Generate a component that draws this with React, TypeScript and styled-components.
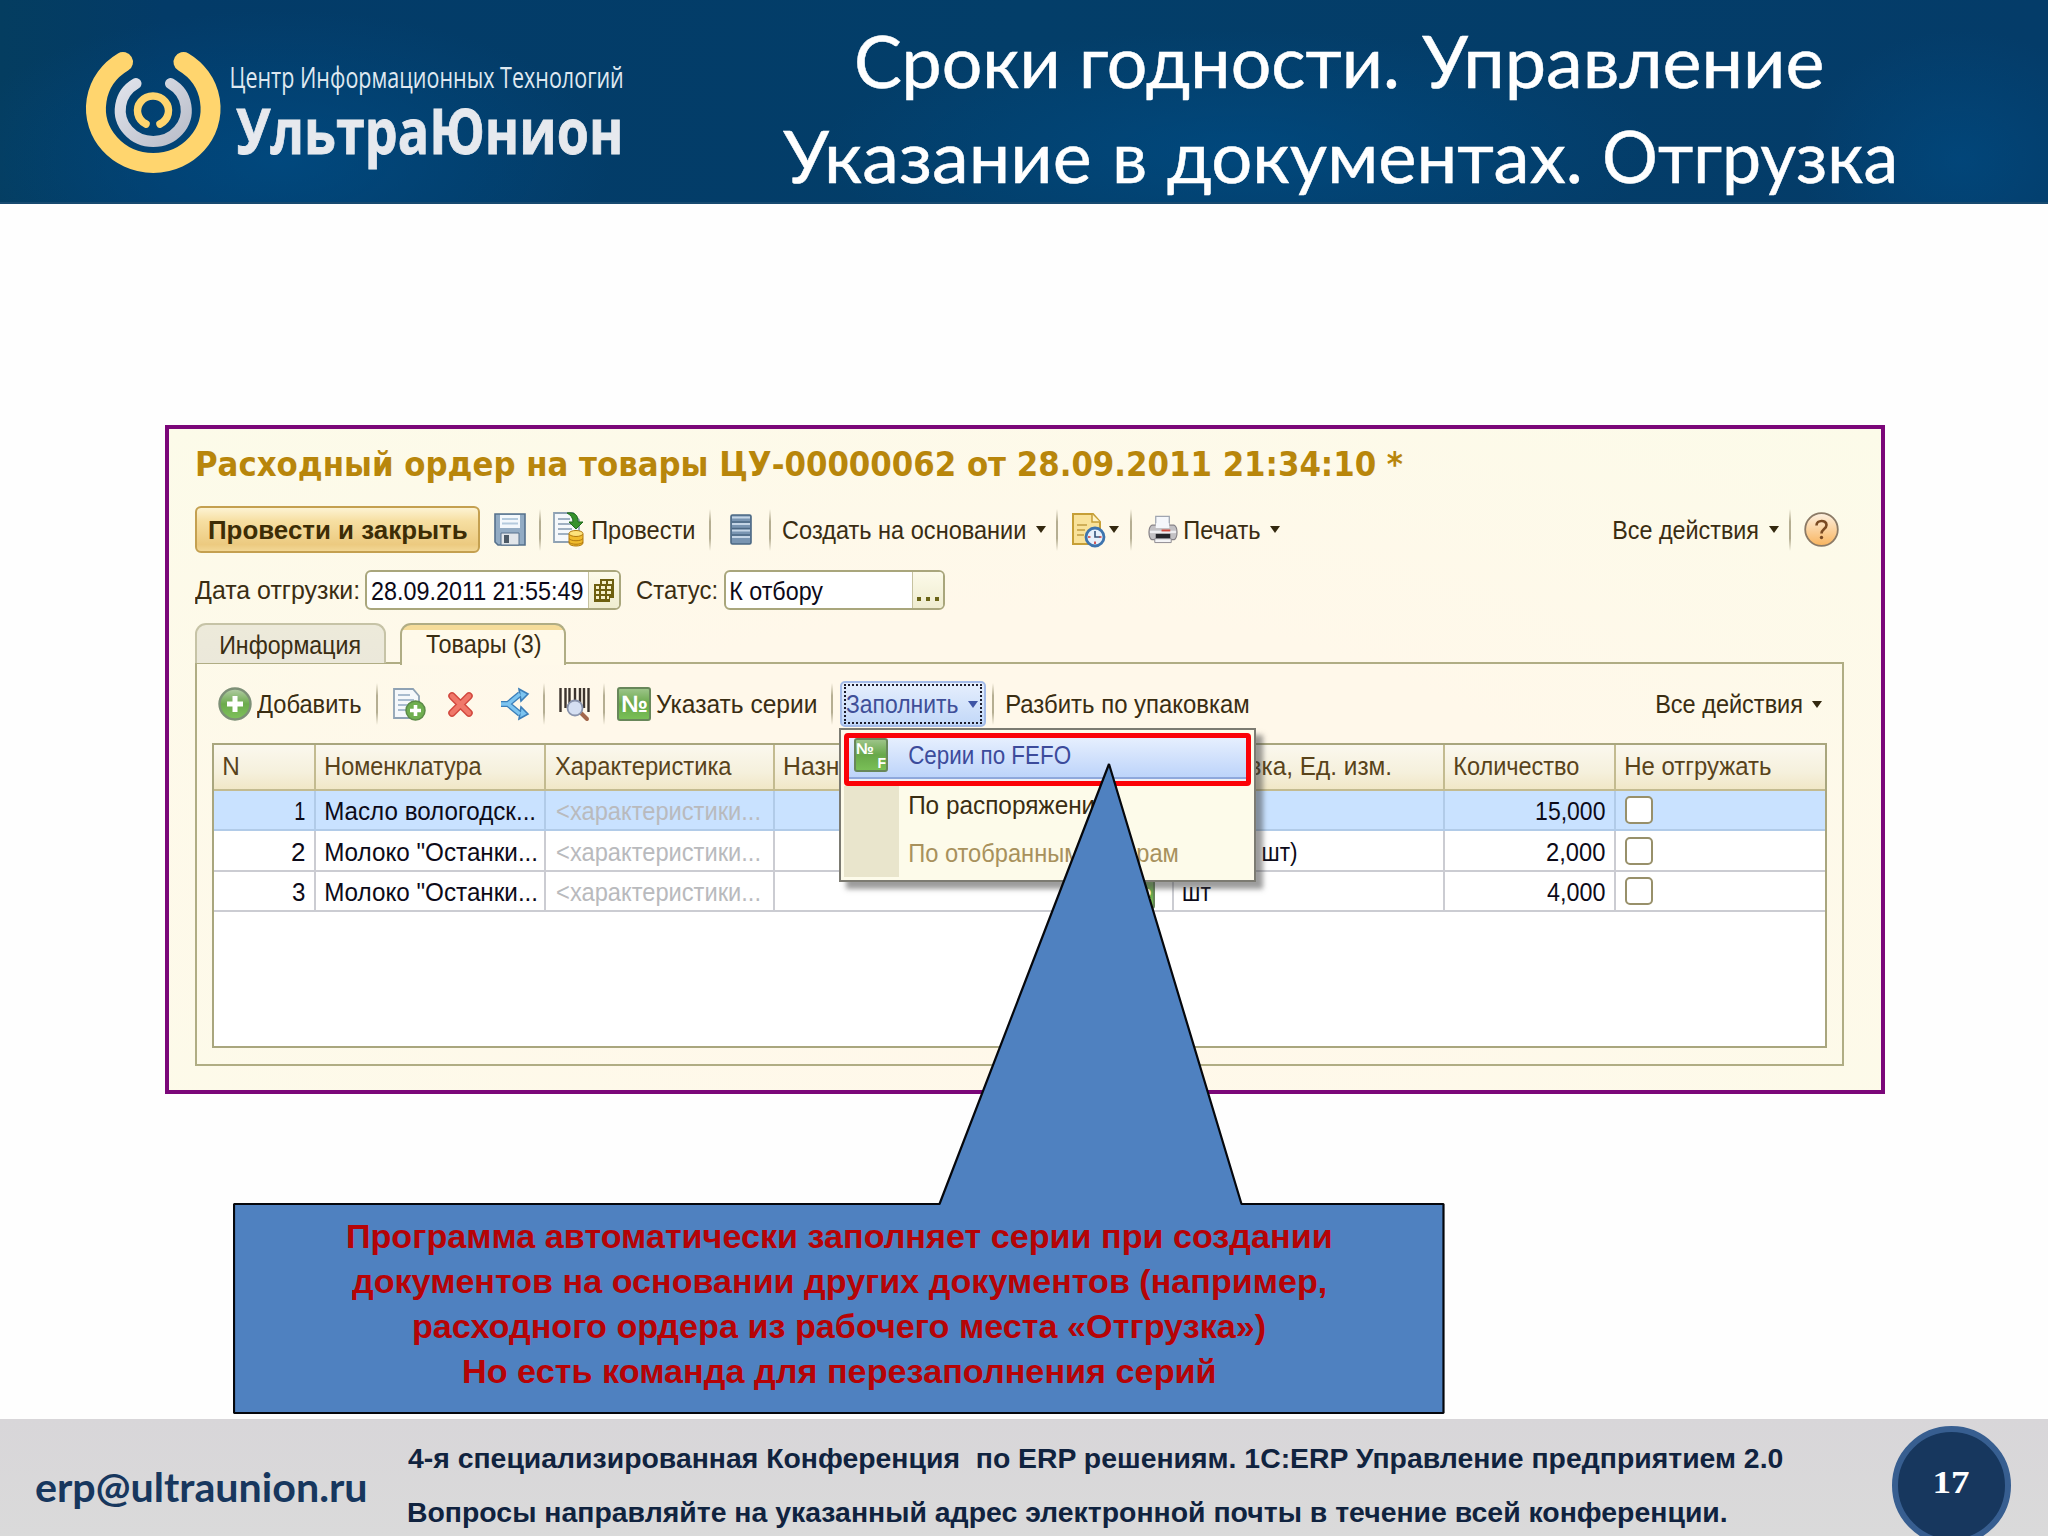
import React, { useLayoutEffect, useRef } from "react";
import styled, { createGlobalStyle, css } from "styled-components";

const GlobalStyle = createGlobalStyle`
  * { box-sizing: border-box; }
  html, body { margin: 0; padding: 0; }
  body { background: #fff; font-family: "Liberation Sans", Arial, sans-serif; }
`;

/* ---------- text fitted to a given ink width ---------- */

type Tone = "ui" | "uiBold" | "docTitle" | "slide" | "logoTop" | "logoMain" | "callout" | "footer" | "mail" | "page";

const tones = {
  ui: css`font: 400 26px/30px "Liberation Sans", Arial, sans-serif;`,
  uiBold: css`font: 700 25.5px/30px "Liberation Sans", Arial, sans-serif;`,
  docTitle: css`font: 700 34px/40px "DejaVu Sans Condensed", "DejaVu Sans", sans-serif;`,
  slide: css`font: 400 71px/95.5px Lato, "Open Sans", sans-serif; -webkit-text-stroke: 0.5px #fff;`,
  logoTop: css`font: 400 29px/36px "Open Sans", "Noto Sans", sans-serif;`,
  logoMain: css`font: 700 62px/70px "Open Sans", "Noto Sans", sans-serif; -webkit-text-stroke: 0.8px #e6e9ee;`,
  callout: css`font: 700 33.5px/45px "Liberation Sans", Arial, sans-serif;`,
  footer: css`font: 700 27.6px/54.6px "Liberation Sans", Arial, sans-serif;`,
  mail: css`font: 700 40px/50px Lato, "Open Sans", sans-serif;`,
  page: css`font: 700 31px/36px "Liberation Serif", serif;`,
};

const FitBox = styled.span<{ $w: number; $tone: Tone; $ml: number; $color?: string }>`
  display: block;
  flex: none;
  width: ${(p) => p.$w}px;
  margin-left: ${(p) => p.$ml}px;
  white-space: pre;
  color: ${(p) => p.$color || "inherit"};
  ${(p) => tones[p.$tone]}
`;
const FitInk = styled.span`
  display: inline-block;
  transform-origin: 0 50%;
`;

function Fit({ w, tone = "ui", ml = 0, color, children }: { w: number; tone?: Tone; ml?: number; color?: string; children: string }) {
  const ref = useRef<HTMLSpanElement>(null);
  useLayoutEffect(() => {
    const el = ref.current;
    const ctx = document.createElement("canvas").getContext("2d");
    if (!el || !ctx) return;
    const s = getComputedStyle(el);
    ctx.font = `${s.fontWeight} ${s.fontSize} ${s.fontFamily}`;
    const m = ctx.measureText(children);
    const k = w / (m.actualBoundingBoxLeft + m.actualBoundingBoxRight);
    el.style.transform = `translateX(${m.actualBoundingBoxLeft * k}px) scaleX(${k})`;
  }, [w, children]);
  return (
    <FitBox $w={w} $tone={tone} $ml={ml} $color={color}>
      <FitInk ref={ref}>{children}</FitInk>
    </FitBox>
  );
}

/* ---------- slide frame ---------- */

const Slide = styled.div`
  width: 2048px;
  height: 1536px;
  display: flex;
  flex-direction: column;
  overflow: hidden;
  background: #fefefe;
`;
const Header = styled.header`
  height: 204px;
  flex: none;
  display: flex;
  border-bottom: 2px solid #174a70;
  background:
    radial-gradient(ellipse 330px 150px at 280px 160px, rgba(0, 76, 132, 0.75), transparent),
    radial-gradient(ellipse 420px 120px at 1240px 150px, rgba(0, 76, 132, 0.7), transparent),
    radial-gradient(ellipse 160px 130px at 1960px 160px, rgba(0, 76, 132, 0.6), transparent),
    linear-gradient(90deg, #043d60, #033b68 8%, #033e69 50%, #043c69);
`;
const Logo = styled.div`
  display: flex;
  align-items: flex-start;
  padding: 50px 0 0 84px;
  width: 782px;
`;
const LogoText = styled.div`
  display: flex;
  flex-direction: column;
  margin-left: 6px;
  padding-top: 9px;
`;
const SlideTitle = styled.h1`
  margin: 0;
  padding-top: 12.5px;
  width: 1112px;
  display: flex;
  flex-direction: column;
  align-items: flex-start;
  color: #fff;
`;
const TitleLine = styled.span`
  display: flex;
`;
const Main = styled.main`
  position: relative;
  flex: 1;
  padding: 221px 0 0 165px;
`;
const Footer = styled.footer`
  height: 117px;
  flex: none;
  display: flex;
  background: linear-gradient(#d8d6d9, #dadada);
  overflow: hidden;
`;
const Mail = styled.div`
  padding: 43px 0 0 36px;
  width: 408px;
  color: #17375e;
`;
const FooterLines = styled.div`
  padding-top: 12.5px;
  width: 1484px;
  color: #10233f;
`;
const PageBadge = styled.div`
  flex: none;
  display: flex;
  align-items: center;
  justify-content: center;
  width: 119px;
  height: 119px;
  margin-top: 7px;
  padding-bottom: 5px;
  border-radius: 50%;
  border: 6px solid #375e90;
  background: #17375e;
  color: #fff;
`;

/* ---------- document window ---------- */

const Window = styled.section`
  width: 1720px;
  height: 669px;
  border: 4px solid #7b0779;
  background: radial-gradient(ellipse 75% 80% at 50% 60%, #fff8ea 40%, #fcfbe9);
  padding-left: 26px;
  color: #3a2d12;
`;
const Row = styled.div<{ $h: number; $mt?: number; $pr?: number }>`
  display: flex;
  align-items: center;
  height: ${(p) => p.$h}px;
  margin-top: ${(p) => p.$mt || 0}px;
  padding-right: ${(p) => p.$pr || 0}px;
`;
const Spacer = styled.div`
  flex: 1;
`;
const PrimaryButton = styled.div`
  display: flex;
  align-items: center;
  width: 285px;
  height: 47px;
  padding-left: 12px;
  border: 2px solid #c4a050;
  border-radius: 6px;
  background: linear-gradient(#fdf3d3, #f6dfa2 30%, #ecca80 85%, #f2d795);
  color: #3d2d05;
`;
const Sep = styled.i<{ $ml: number }>`
  width: 2px;
  height: 42px;
  flex: none;
  margin-left: ${(p) => p.$ml}px;
  background: linear-gradient(transparent, #b5ae92 30%, #b5ae92 70%, transparent);
`;
const Arrow = styled.i<{ $ml: number; $blue?: boolean }>`
  flex: none;
  margin-left: ${(p) => p.$ml}px;
  border: solid transparent;
  border-width: 7px 5.5px 0;
  border-top-color: ${(p) => (p.$blue ? "#3f55a5" : "#33280f")};
`;
const Icon = styled.svg<{ $ml?: number }>`
  display: block;
  flex: none;
  overflow: visible;
  margin-left: ${(p) => p.$ml || 0}px;
`;
const Field = styled.div<{ $w: number; $ml: number }>`
  display: flex;
  width: ${(p) => p.$w}px;
  height: 40px;
  margin-left: ${(p) => p.$ml}px;
  border: 2px solid #a9a67c;
  border-radius: 6px;
  background: #fff;
  overflow: hidden;
  color: #0b0818;
`;
const FieldValue = styled.div`
  flex: 1;
  display: flex;
  align-items: center;
  padding: 2px 0 0 5px;
`;
const FieldButton = styled.div<{ $w: number }>`
  width: ${(p) => p.$w}px;
  display: flex;
  align-items: center;
  justify-content: center;
  border-left: 1.5px solid #c6c2a0;
  background: linear-gradient(#fcfae9, #efecd0);
`;
const Dots = styled.div`
  align-self: flex-end;
  display: flex;
  gap: 5px;
  margin-bottom: 7px;
`;
const Dot = styled.i`
  width: 4px;
  height: 4px;
  background: #6a6418;
`;
const Tabs = styled.div`
  display: flex;
  height: 41px;
  margin-top: 13px;
  gap: 14px;
`;
const Tab = styled.div<{ $w: number; $active?: boolean }>`
  display: flex;
  align-items: center;
  justify-content: center;
  width: ${(p) => p.$w}px;
  height: ${(p) => (p.$active ? 42 : 40)}px;
  padding: ${(p) => (p.$active ? "0 0 2px" : "1px 0 0")};
  border: 2px solid ${(p) => (p.$active ? "#b0ad84" : "#c6c3a6")};
  border-bottom: 0;
  border-radius: 11px 11px 0 0;
  position: relative;
  z-index: 1;
  background: ${(p) =>
    p.$active ? "linear-gradient(#f5dc9a 5px, #fffaea 5px, #fff9ea)" : "linear-gradient(#edeada, #ebe8da)"};
`;
const Panel = styled.div`
  width: 1649px;
  height: 404px;
  border: 2px solid #b0ad84;
  padding-top: 17px;
  margin-top: -2px;
`;
const MenuAnchor = styled.div`
  position: relative;
  flex: none;
  margin-left: 7px;
`;
const FillButton = styled.div`
  display: flex;
  align-items: center;
  width: 146px;
  height: 46px;
  padding: 2px;
  border: 2px solid #a3bae8;
  border-radius: 5px;
  background: linear-gradient(#e6effd, #c2d8f8);
  color: #3f4f98;
`;
const FocusRing = styled.div`
  display: flex;
  align-items: center;
  width: 138px;
  height: 40px;
  border: 2px dotted #1c1c2c;
`;
const Menu = styled.div`
  position: absolute;
  left: -1px;
  top: 47px;
  z-index: 5;
  width: 417px;
  height: 154px;
  padding: 3px;
  border: 2px solid #7c7b72;
  background: #fdfbea;
  box-shadow: 7px 7px 5px rgba(60, 60, 60, 0.5);
`;
const MenuActive = styled.div`
  display: flex;
  align-items: center;
  height: 53px;
  padding: 0 0 9px 5px;
  border: 5px solid #fb0207;
  border-radius: 4px;
  background: linear-gradient(#e6effe, #bdd4fa 39px, #8fa8dc 39px, #8fa8dc 41px, #eef0f5 41px);
  color: #3c4b9b;
`;
const MenuRest = styled.div`
  display: flex;
  flex-direction: column;
  height: 91px;
  border-left: 55px solid #e9e5cc;
`;
const MenuItem = styled.div`
  display: flex;
  flex: none;
  align-items: center;
  height: 38px;
  & + & { margin-top: 10px; }
`;

const Table = styled.div`
  width: 1615px;
  height: 305px;
  margin: 16px 0 0 15px;
  border: 2px solid #a9a67e;
  background: #fff;
`;
const TableRow = styled.div<{ $kind?: "head" | "active" }>`
  display: grid;
  grid-template-columns: 102px 230px 229px 399px 271px 171px 209px;
  height: ${(p) => (p.$kind === "head" ? 46 : 40.4)}px;
  color: ${(p) => (p.$kind === "head" ? "#59431a" : "#0c0a18")};
  background: ${(p) =>
    p.$kind === "head" ? "linear-gradient(#fbf8ee, #f5f0dc 60%, #f0e6c4)" : p.$kind === "active" ? "#c9e2ff" : "#fff"};
  --line: ${(p) => (p.$kind === "head" ? "#c3bb90" : p.$kind === "active" ? "#b1cbe8" : "#cbccd2")};
  --shift: ${(p) => (p.$kind === "head" ? "0 0 3px" : "2px 0 0")};
`;
const Cell = styled.div<{ $right?: boolean; $pad?: number }>`
  display: flex;
  align-items: center;
  justify-content: ${(p) => (p.$right ? "flex-end" : "flex-start")};
  padding: var(--shift);
  padding-right: ${(p) => (p.$right ? p.$pad ?? 9 : 0)}px;
  padding-left: ${(p) => (p.$right ? 0 : p.$pad ?? 10)}px;
  border-bottom: 2px solid var(--line);
  border-right: 2px solid var(--line);
  &:last-child { border-right: 0; }
`;
const Check = styled.i`
  width: 28px;
  height: 28px;
  margin-top: -2px;
  border: 2px solid #98906a;
  border-radius: 5px;
  background: #fff;
`;

/* ---------- callout ---------- */

const Callout = styled.div`
  position: absolute;
  left: 233px;
  top: 559px;
  width: 1212px;
  height: 652px;
  z-index: 10;
`;
const CalloutShape = styled.svg`
  position: absolute;
  inset: 0;
`;
const CalloutText = styled.div`
  position: relative;
  display: flex;
  flex-direction: column;
  align-items: center;
  padding-top: 450.5px;
  color: #b60306;
`;

/* ---------- icons ---------- */

const LogoMark = () => (
  <Icon width="138" height="124" viewBox="84 50 138 124" fill="none" strokeLinecap="round">
    <defs>
      <linearGradient id="silver" x1="0" y1="0" x2="1" y2="1">
        <stop offset="0" stopColor="#dfe2ea" />
        <stop offset="1" stopColor="#b9bdc9" />
      </linearGradient>
    </defs>
    <path d="M123 62A57.300 54.600 0 1 0 183.500 62" stroke="#ffd56e" strokeWidth="20" />
    <path d="M136 83.500A33 31.300 0 1 0 170.500 83.500" stroke="url(#silver)" strokeWidth="11" />
    <path d="M146 124A15.500 14.800 0 1 1 160 124" stroke="#ffd56e" strokeWidth="7.500" />
  </Icon>
);
const Floppy = () => (
  <Icon $ml={14} width="32" height="33" viewBox="0 0 32 33">
    <path d="M1 1h30v31H4l-3-3z" fill="#93acc4" stroke="#56718c" strokeWidth="1.600" />
    <path d="M6 2h20v13H6z" fill="#f3f8fc" />
    <path d="M8 6h16M8 10.500h16" stroke="#b4cadd" strokeWidth="2" />
    <path d="M7 20h18v12H7z" fill="#e2e6ea" stroke="#56718c" />
    <path d="M10 22h5v8h-5z" fill="#4d5a66" />
  </Icon>
);
const PageLines = ({ tone }: { tone: string }) => (
  <g>
    <path d="M1 1h19l6 7v22H1z" fill="#f5f8fb" stroke="#8fa2b4" strokeWidth="1.800" />
    <path d="M5 7h12M5 12h16M5 17h14M5 22h14" stroke={tone} strokeWidth="2" />
  </g>
);
const PostIcon = () => (
  <Icon $ml={12} width="32" height="35" viewBox="0 0 32 35">
    <PageLines tone="#9fb0c2" />
    <path d="M14 1c8-1 11 2 11 9h5l-7 7-7-7h4c0-4-2-7-6-9z" fill="#36922c" stroke="#1f6a1c" />
    <path d="M16 22v9c0 4 14 4 14 0v-9z" fill="#f0bb2d" stroke="#b27a10" />
    <ellipse cx="23" cy="21.500" rx="7" ry="3" fill="#fde37c" stroke="#b27a10" />
    <path d="M16 26.500c2 3 12 3 14 0M16 30c2 3 12 3 14 0" fill="none" stroke="#b27a10" />
  </Icon>
);
const StackIcon = () => (
  <Icon $ml={19} width="22" height="31" viewBox="0 0 22 31">
    <rect x="1" y="1" width="20" height="29" rx="1.500" fill="#7995b2" stroke="#4b6884" strokeWidth="1.600" />
    <path d="M2 3.500h18M2 10h18M2 16.500h18M2 23h18" stroke="#c4d5e6" strokeWidth="2" />
    <path d="M2 8h18M2 14.500h18M2 21h18" stroke="#4b6884" strokeWidth="1.500" />
  </Icon>
);
const DocClock = () => (
  <Icon $ml={14} width="33" height="34" viewBox="0 0 33 34">
    <path d="M1 1h20l7 8v22H1z" fill="#f9e29a" stroke="#c69f37" strokeWidth="2" />
    <path d="M20 1v8h8" fill="#fff3c4" stroke="#c69f37" strokeWidth="1.500" />
    <path d="M5 12h10M5 17h8M5 22h7" stroke="#cfae58" strokeWidth="2" />
    <circle cx="23" cy="24" r="9" fill="#e6f0fb" stroke="#3e74ae" strokeWidth="2.800" />
    <path d="M23 18v6h5" stroke="#34537b" strokeWidth="1.600" fill="none" />
    <path d="M16 24h2.500M23 28.500v2.500M27.500 24h2" stroke="#c33" strokeWidth="1.600" />
  </Icon>
);
const Printer = () => (
  <Icon $ml={16} width="30" height="29" viewBox="0 0 31 29">
    <path d="M8 12V1h14v11z" fill="#f5f7fb" stroke="#9fa5b0" strokeWidth="1.300" />
    <path d="M4 10h23c2 1 3 3 3 7 0 5-1 7-3 8H4c-2-1-3-3-3-8 0-4 1-6 3-7z" fill="#c3c1c4" stroke="#858186" strokeWidth="1.200" />
    <path d="M8 8h14v5H8z" fill="#f5f7fb" />
    <path d="M2 17h27" stroke="#eeedf0" strokeWidth="2.500" />
    <path d="M14 15.500h9" stroke="#d14a3e" strokeWidth="2" />
    <path d="M8 19h15v5H8z" fill="#26252a" />
    <path d="M7 24h17v4H7z" fill="#f4f4f6" stroke="#8d8a90" />
  </Icon>
);
const Help = () => (
  <Icon $ml={13} width="35" height="35" viewBox="0 0 35 35">
    <defs>
      <linearGradient id="help" x1="0" y1="0" x2="0" y2="1">
        <stop offset="0" stopColor="#fdf0e0" />
        <stop offset="1" stopColor="#f8b45e" />
      </linearGradient>
    </defs>
    <circle cx="17.500" cy="17.500" r="16.300" fill="url(#help)" stroke="#8b7a66" strokeWidth="1.800" />
    <path d="M12.500 13.500c0-6 10-6 10-0.500 0 4-5 4-5 8.500" fill="none" stroke="#7a4a22" strokeWidth="2.600" />
    <circle cx="17.500" cy="25.500" r="1.700" fill="#7a4a22" />
  </Icon>
);
const CalendarIcon = () => (
  <Icon width="22" height="25" viewBox="0 0 22 25">
    <path d="M7 1h14v19h-4v4H1V6h6z" fill="#6d5f10" />
    <path
      d="M9 3h4v3H9zM15 3h4v3h-4zM3 8h3v3H3zM8 8h4v3H8zM14 8h4v3h-4zM3 13h3v3H3zM8 13h4v3H8zM14 13h4v3h-4zM3 18h3v3H3zM8 18h4v3H8zM14 18h2v3h-2z"
      fill="#f6f1c8"
    />
  </Icon>
);
const AddIcon = () => (
  <Icon $ml={21} width="34" height="34" viewBox="0 0 34 34">
    <defs>
      <linearGradient id="green" x1="0" y1="0" x2="0" y2="1">
        <stop offset="0" stopColor="#b4cda8" />
        <stop offset="0.500" stopColor="#6cab4c" />
        <stop offset="1" stopColor="#7fc25c" />
      </linearGradient>
    </defs>
    <circle cx="17" cy="17" r="15.500" fill="url(#green)" stroke="#7d9077" strokeWidth="2.400" />
    <path d="M17 9v16M9 17h16" stroke="#fff" strokeWidth="5" />
  </Icon>
);
const CopyIcon = () => (
  <Icon $ml={15} width="33" height="33" viewBox="0 0 33 33">
    <PageLines tone="#a9bccf" />
    <circle cx="22.500" cy="22.500" r="9.500" fill="#6fae50" stroke="#5c8a48" strokeWidth="1.500" />
    <path d="M22.500 17v11M17 22.500h11" stroke="#fff" strokeWidth="3.600" />
  </Icon>
);
const DeleteIcon = () => (
  <Icon $ml={22} width="25" height="25" viewBox="0 0 25 25">
    <path d="M4 4l17 17M21 4L4 21" stroke="#d2483e" strokeWidth="7.500" strokeLinecap="round" />
    <path d="M4 4l17 17M21 4L4 21" stroke="#f0786a" strokeWidth="4.600" strokeLinecap="round" />
  </Icon>
);
const ShareIcon = () => {
  const d = "M2 16h7l12-10M9 16l12 10";
  return (
    <Icon $ml={26} width="32" height="32" viewBox="0 0 32 32" fill="none">
      <path d={d} stroke="#3c7fb9" strokeWidth="6" />
      <path d="M20 1l9 5-7 7zM20 31l9-5-7-7z" fill="#7cc4f0" stroke="#3c7fb9" strokeWidth="1.600" />
      <path d={d} stroke="#7cc4f0" strokeWidth="3.400" />
    </Icon>
  );
};
const BarcodeIcon = () => (
  <Icon $ml={14} width="31" height="33" viewBox="0 0 31 33">
    <path d="M1.500 0v24M6.500 0v20M10.500 0v20M16 0v20M21 0v20M25 0v20M29.500 0v24" stroke="#3c342e" strokeWidth="2.400" />
    <path d="M22 25l6 6" stroke="#a3674c" strokeWidth="4" strokeLinecap="round" />
    <circle cx="16" cy="20" r="7.500" fill="#d5dff2" stroke="#8a94ad" strokeWidth="1.800" />
  </Icon>
);
const SeriesBadge = styled.div<{ $size: number; $sub?: boolean; $ml?: number }>`
  display: flex;
  flex-direction: column;
  justify-content: center;
  align-items: ${(p) => (p.$sub ? "flex-start" : "center")};
  flex: none;
  width: 34px;
  height: 34px;
  margin-left: ${(p) => p.$ml || 0}px;
  border: 2px solid #68875a;
  border-radius: 3px;
  background: linear-gradient(#9cc488, #68a849 50%, #79bf57);
  color: #fff;
  font: 700 ${(p) => p.$size}px/${(p) => (p.$sub ? 16 : 30)}px "Liberation Sans", Arial, sans-serif;
  letter-spacing: -1px;
  white-space: nowrap;
`;
const SubLetter = styled.span`
  align-self: flex-end;
  padding-right: 1px;
  font-size: 14px;
  line-height: 13px;
`;

/* ---------- data ---------- */

const rows = [
  { n: "1", nw: 10, name: "Масло вологодск...", w: 208, unit: "", uw: 0, qty: "15,000", qw: 69 },
  { n: "2", nw: 13, name: 'Молоко "Останки...', w: 210, unit: "упак (8 шт)", uw: 114, qty: "2,000", qw: 58 },
  { n: "3", nw: 13, name: 'Молоко "Останки...', w: 210, unit: "шт", uw: 28, qty: "4,000", qw: 58 },
];

export default function App() {
  return (
    <Slide>
      <GlobalStyle />
      <Header>
        <Logo>
          <LogoMark />
          <LogoText>
            <Fit tone="logoTop" w={391} ml={3} color="#dfe8f0">Центр Информационных Технологий</Fit>
            <Fit tone="logoMain" w={384} ml={8} color="#e6e9ee">УльтраЮнион</Fit>
          </LogoText>
        </Logo>
        <SlideTitle>
          <TitleLine>
            <Fit tone="slide" w={539} ml={75}>Сроки годности.</Fit>
            <Fit tone="slide" w={400} ml={26}>Управление</Fit>
          </TitleLine>
          <TitleLine>
            <Fit tone="slide" w={306} ml={1}>Указание</Fit>
            <Fit tone="slide" w={28} ml={28}>в</Fit>
            <Fit tone="slide" w={412} ml={22}>документах.</Fit>
            <Fit tone="slide" w={289} ml={26}>Отгрузка</Fit>
          </TitleLine>
        </SlideTitle>
      </Header>

      <Main>
        <Window>
          <Row $h={70}>
            <Fit tone="docTitle" w={1206} ml={2} color="#b8860b">Расходный ордер на товары ЦУ-00000062 от 28.09.2011 21:34:10 *</Fit>
          </Row>
          <Row $h={47} $mt={7} $pr={42}>
            <PrimaryButton><Fit tone="uiBold" w={258}>Провести и закрыть</Fit></PrimaryButton>
            <Floppy />
            <Sep $ml={13} />
            <PostIcon />
            <Fit w={101} ml={8}>Провести</Fit>
            <Sep $ml={15} />
            <StackIcon />
            <Sep $ml={17} />
            <Fit w={242} ml={12}>Создать на основании</Fit>
            <Arrow $ml={11} />
            <Sep $ml={10} />
            <DocClock />
            <Arrow $ml={4} />
            <Sep $ml={11} />
            <Printer />
            <Fit w={75} ml={7}>Печать</Fit>
            <Arrow $ml={10} />
            <Spacer />
            <Fit w={144}>Все действия</Fit>
            <Arrow $ml={11} />
            <Sep $ml={10} />
            <Help />
          </Row>
          <Row $h={40} $mt={17}>
            <Fit w={163}>Дата отгрузки:</Fit>
            <Field $w={256} $ml={7}>
              <FieldValue><Fit w={211}>28.09.2011 21:55:49</Fit></FieldValue>
              <FieldButton $w={31}><CalendarIcon /></FieldButton>
            </Field>
            <Fit w={79} ml={16}>Статус:</Fit>
            <Field $w={221} $ml={8}>
              <FieldValue><Fit w={92}>К отбору</Fit></FieldValue>
              <FieldButton $w={31}><Dots><Dot /><Dot /><Dot /></Dots></FieldButton>
            </Field>
          </Row>
          <Tabs>
            <Tab $w={191}><Fit w={139}>Информация</Fit></Tab>
            <Tab $w={166} $active><Fit w={115}>Товары (3)</Fit></Tab>
          </Tabs>
          <Panel>
            <Row $h={46} $pr={20}>
              <AddIcon />
              <Fit w={104} ml={5}>Добавить</Fit>
              <Sep $ml={15} />
              <CopyIcon />
              <DeleteIcon />
              <ShareIcon />
              <Sep $ml={12} />
              <BarcodeIcon />
              <Sep $ml={13} />
              <SeriesBadge $ml={12} $size={24}>№</SeriesBadge>
              <Fit w={160} ml={5}>Указать серии</Fit>
              <Sep $ml={15} />
              <MenuAnchor>
                <FillButton>
                  <FocusRing>
                    <Fit w={112}>Заполнить</Fit>
                    <Arrow $ml={10} $blue />
                  </FocusRing>
                </FillButton>
                <Menu>
                  <MenuActive>
                    <SeriesBadge $size={16} $sub>№<SubLetter>F</SubLetter></SeriesBadge>
                    <Fit w={161} ml={21}>Серии по FEFO</Fit>
                  </MenuActive>
                  <MenuRest>
                    <MenuItem><Fit w={203} ml={11}>По распоряжению</Fit></MenuItem>
                    <MenuItem><Fit w={268} ml={11} color="#a8915c">По отобранным товарам</Fit></MenuItem>
                  </MenuRest>
                </Menu>
              </MenuAnchor>
              <Sep $ml={6} />
              <Fit w={242} ml={13}>Разбить по упаковкам</Fit>
              <Spacer />
              <Fit w={145}>Все действия</Fit>
              <Arrow $ml={10} />
            </Row>
            <Table>
              <TableRow $kind="head">
                <Cell><Fit w={14}>N</Fit></Cell>
                <Cell><Fit w={156}>Номенклатура</Fit></Cell>
                <Cell $pad={9}><Fit w={177}>Характеристика</Fit></Cell>
                <Cell><Fit w={135}>Назначение</Fit></Cell>
                <Cell $pad={9}><Fit w={207}>Упаковка, Ед. изм.</Fit></Cell>
                <Cell><Fit w={124}>Количество</Fit></Cell>
                <Cell><Fit w={145}>Не отгружать</Fit></Cell>
              </TableRow>
              {rows.map((r, i) => (
                <TableRow key={r.n} $kind={i === 0 ? "active" : undefined}>
                  <Cell $right><Fit w={r.nw}>{r.n}</Fit></Cell>
                  <Cell><Fit w={r.w}>{r.name}</Fit></Cell>
                  <Cell $pad={11}><Fit w={202} color="#b9babd">{"<характеристики..."}</Fit></Cell>
                  <Cell $right $pad={17}>{i === 2 && <SeriesBadge $size={24}>№</SeriesBadge>}</Cell>
                  <Cell $pad={9}>{r.unit && <Fit w={r.uw}>{r.unit}</Fit>}</Cell>
                  <Cell $right><Fit w={r.qw}>{r.qty}</Fit></Cell>
                  <Cell $pad={9}><Check /></Cell>
                </TableRow>
              ))}
            </Table>
          </Panel>
        </Window>

        <Callout>
          <CalloutShape width="1212" height="652" viewBox="233 763 1212 652">
            <path d="M234 1204H939.500L1109 764L1241.500 1204H1443.500V1413H234Z" fill="#4f81c0" stroke="#05070c" strokeWidth="2.200" strokeLinejoin="bevel" />
          </CalloutShape>
          <CalloutText>
            <Fit tone="callout" w={983}>Программа автоматически заполняет серии при создании</Fit>
            <Fit tone="callout" w={974}>документов на основании других документов (например,</Fit>
            <Fit tone="callout" w={851}>расходного ордера из рабочего места «Отгрузка»)</Fit>
            <Fit tone="callout" w={751}>Но есть команда для перезаполнения серий</Fit>
          </CalloutText>
        </Callout>
      </Main>

      <Footer>
        <Mail><Fit tone="mail" w={330}>erp@ultraunion.ru</Fit></Mail>
        <FooterLines>
          <Fit tone="footer" w={1376}>4-я специализированная Конференция  по ERP решениям. 1С:ERP Управление предприятием 2.0</Fit>
          <Fit tone="footer" w={1318}>Вопросы направляйте на указанный адрес электронной почты в течение всей конференции.</Fit>
        </FooterLines>
        <PageBadge><Fit tone="page" w={34}>17</Fit></PageBadge>
      </Footer>
    </Slide>
  );
}
